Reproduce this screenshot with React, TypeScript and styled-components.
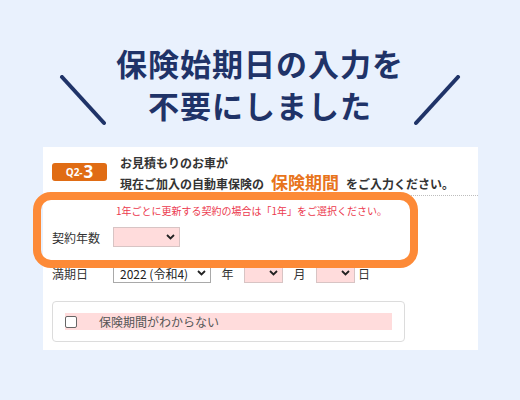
import React from 'react';
import styled, { createGlobalStyle } from 'styled-components';

const GlobalStyle = createGlobalStyle`
  html, body {
    margin: 0;
    padding: 0;
    background: #e9f1fd;
  }
  body {
    width: 520px;
    height: 400px;
    overflow: hidden;
    font-family: "Noto Sans CJK JP", "Noto Sans", sans-serif;
  }
`;

const Page = styled.div`
  width: 520px;
  height: 400px;
  display: flex;
  flex-direction: column;
`;

const Header = styled.div`
  height: 147px;
  display: flex;
  align-items: flex-start;
  justify-content: center;
  gap: 4px;
  padding-top: 42px;
  box-sizing: border-box;
`;

const Slash = styled.svg`
  width: 48px;
  height: 52px;
  margin-top: 33px;
  flex: none;
`;

const Title = styled.h1`
  margin: 0;
  width: 300px;
  text-align: center;
  font-size: 31px;
  line-height: 42px;
  font-weight: 700;
  color: #1f3368;
  letter-spacing: 1px;
`;

const Panel = styled.div`
  margin-left: 43px;
  width: 435px;
  height: 203px;
  background: #fff;
  box-sizing: border-box;
  padding: 6px 0 0 9px;
  color: #333;
`;

const QuestionRow = styled.div`
  display: flex;
  align-items: center;
  gap: 13px;
  padding-bottom: 2px;
  border-bottom: 1px dotted #bdbdbd;
`;

const Badge = styled.div`
  width: 55px;
  height: 18px;
  border-radius: 3px;
  background: #e06c14;
  color: #fff;
  display: flex;
  align-items: center;
  justify-content: center;
  font-family: "Open Sans", "Noto Sans", sans-serif;
  font-weight: 700;
  margin-top: -3px;
`;

const BadgeSmall = styled.span`
  font-size: 10px;
`;

const BadgeBig = styled.span`
  font-size: 17px;
  margin-left: 1px;
`;

const QuestionText = styled.div`
  font-size: 12px;
  line-height: 19px;
  font-weight: 700;
  color: #333;
`;

const Accent = styled.span`
  font-size: 17px;
  color: #e8741c;
  margin: 0 7px;
`;

const Highlight = styled.div`
  position: relative;
  padding: 8px 0 8px 0;

  &::before {
    content: '';
    position: absolute;
    left: -19px;
    top: -4px;
    width: 385px;
    height: 76px;
    border: 8px solid #fd8a37;
    border-radius: 18px;
    box-sizing: border-box;
    pointer-events: none;
  }
`;

const Note = styled.div`
  font-size: 10px;
  line-height: 14px;
  color: #ec3a4e;
  padding-left: 64px;
`;

const Row = styled.div<{ $top?: number }>`
  display: flex;
  align-items: center;
  height: 20px;
  margin-top: ${p => p.$top ?? 0}px;
  font-size: 12px;
  color: #333;
`;

const Label = styled.span`
  width: 61px;
  flex: none;
`;

const Unit = styled.span<{ $w: number }>`
  width: ${p => p.$w}px;
  text-align: center;
  flex: none;
`;

const SelectBox = styled.div<{ $w: number; $pink?: boolean }>`
  width: ${p => p.$w}px;
  height: 20px;
  box-sizing: border-box;
  border: 1px solid ${p => (p.$pink ? '#d8c4c4' : '#a9a9a9')};
  background: ${p => (p.$pink ? '#ffdcdc' : '#fff')};
  display: flex;
  align-items: center;
  justify-content: space-between;
  padding: 0 4px 0 6px;
  font-size: 12px;
  color: #222;
  flex: none;
`;

const CheckCard = styled.div`
  margin-top: 18px;
  width: 353px;
  height: 41px;
  box-sizing: border-box;
  border: 1px solid #dcdcdc;
  border-radius: 4px;
  padding: 11px 12px 0 12px;
`;

const CheckStrip = styled.label`
  display: flex;
  align-items: center;
  height: 17px;
  background: #ffdcdc;
  font-size: 12px;
  color: #555;
`;

const CheckBox = styled.span`
  width: 10px;
  height: 10px;
  border: 1px solid #666;
  border-radius: 2px;
  background: #fff;
  margin-right: 22px;
`;

const Chevron = () => (
  <svg width="9" height="6" viewBox="0 0 9 6">
    <path d="M1 1l3.5 3.5L8 1" fill="none" stroke="#222" strokeWidth="1.8" />
  </svg>
);

const Select: React.FC<{ w: number; pink?: boolean; value?: string }> = ({ w, pink, value }) => (
  <SelectBox $w={w} $pink={pink}>
    <span>{value}</span>
    <Chevron />
  </SelectBox>
);

export default function App() {
  return (
    <Page>
      <GlobalStyle />
      <Header>
        <Slash viewBox="0 0 48 52">
          <line x1="4" y1="2" x2="46" y2="48" stroke="#1f3368" strokeWidth="4" strokeLinecap="round" />
        </Slash>
        <Title>
          保険始期日の入力を
          <br />
          不要にしました
        </Title>
        <Slash viewBox="0 0 48 52">
          <line x1="44" y1="2" x2="2" y2="48" stroke="#1f3368" strokeWidth="4" strokeLinecap="round" />
        </Slash>
      </Header>
      <Panel>
        <QuestionRow>
          <Badge>
            <BadgeSmall>Q2-</BadgeSmall>
            <BadgeBig>3</BadgeBig>
          </Badge>
          <QuestionText>
            お見積もりのお車が
            <br />
            現在ご加入の自動車保険の<Accent>保険期間</Accent>をご入力ください。
          </QuestionText>
        </QuestionRow>
        <Highlight>
          <Note>1年ごとに更新する契約の場合は「1年」をご選択ください。</Note>
          <Row $top={9}>
            <Label>契約年数</Label>
            <Select w={67} pink />
          </Row>
        </Highlight>
        <Row $top={8}>
          <Label>満期日</Label>
          <Select w={98} value="2022 (令和4)" />
          <Unit $w={33}>年</Unit>
          <Select w={39} pink />
          <Unit $w={33}>月</Unit>
          <Select w={39} pink />
          <Unit $w={18}>日</Unit>
        </Row>
        <CheckCard>
          <CheckStrip>
            <CheckBox />
            保険期間がわからない
          </CheckStrip>
        </CheckCard>
      </Panel>
    </Page>
  );
}
